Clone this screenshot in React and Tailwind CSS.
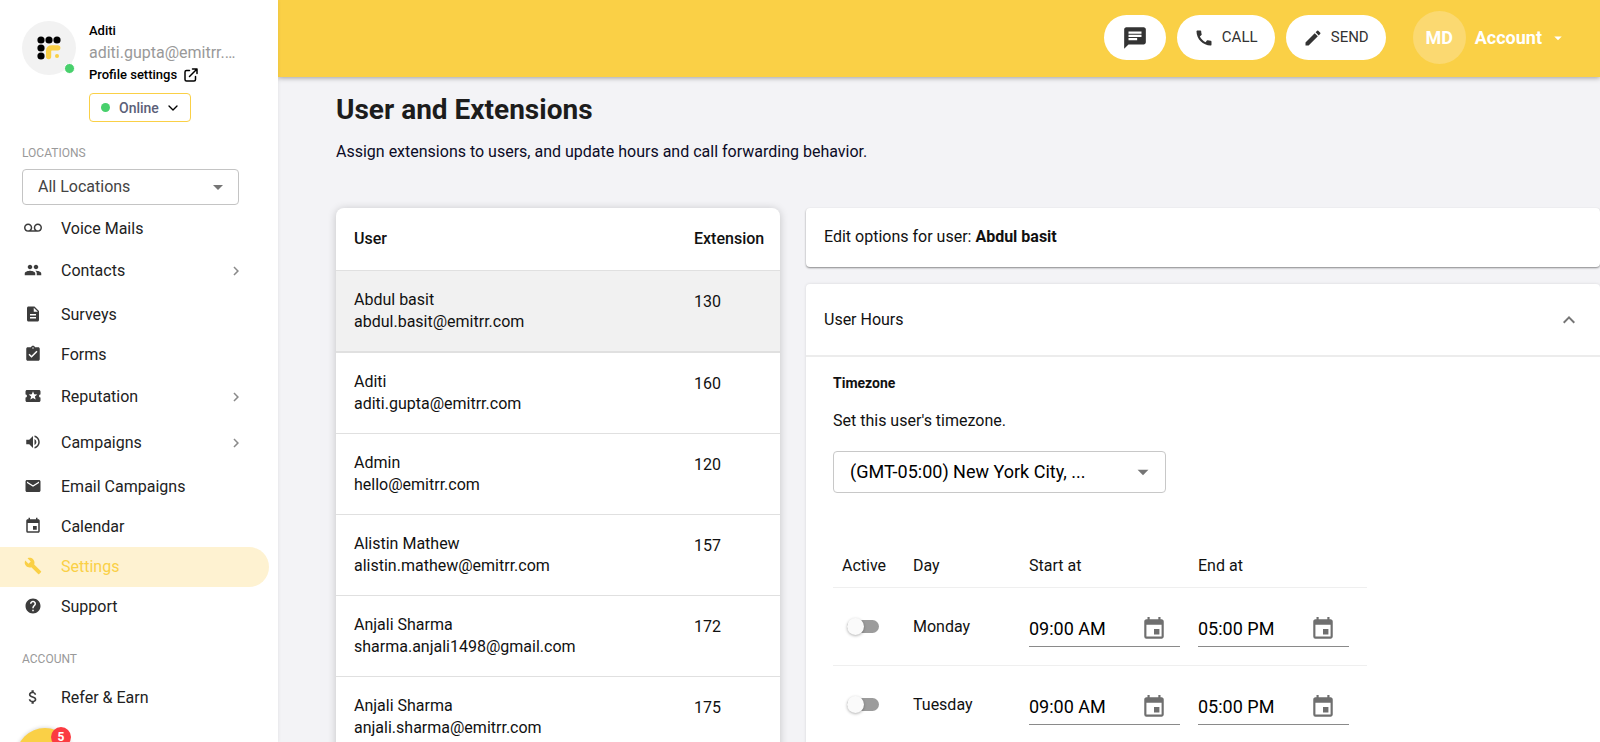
import React, { useState } from "react";
import {
  MdVoicemail,
  MdPeople,
  MdDescription,
  MdAssignmentTurnedIn,
  MdLocalActivity,
  MdVolumeUp,
  MdEmail,
  MdEvent,
  MdBuild,
  MdHelp,
  MdAttachMoney,
  MdChat,
  MdCall,
  MdCreate,
  MdArrowDropDown,
  MdExpandLess,
  MdChevronRight,
} from "react-icons/md";
import { HiOutlineExternalLink } from "react-icons/hi";
import { ChevronDown } from "lucide-react";
import clsx from "clsx";

const navItems = [
  { label: "Voice Mails", icon: MdVoicemail },
  { label: "Contacts", icon: MdPeople, expandable: true },
  { label: "Surveys", icon: MdDescription },
  { label: "Forms", icon: MdAssignmentTurnedIn },
  { label: "Reputation", icon: MdLocalActivity, expandable: true },
  { label: "Campaigns", icon: MdVolumeUp, expandable: true },
  { label: "Email Campaigns", icon: MdEmail },
  { label: "Calendar", icon: MdEvent },
  { label: "Settings", icon: MdBuild, active: true },
  { label: "Support", icon: MdHelp },
];

const users = [
  { name: "Abdul basit", email: "abdul.basit@emitrr.com", extension: 130 },
  { name: "Aditi", email: "aditi.gupta@emitrr.com", extension: 160 },
  { name: "Admin", email: "hello@emitrr.com", extension: 120 },
  { name: "Alistin Mathew", email: "alistin.mathew@emitrr.com", extension: 157 },
  { name: "Anjali Sharma", email: "sharma.anjali1498@gmail.com", extension: 172 },
  { name: "Anjali Sharma", email: "anjali.sharma@emitrr.com", extension: 175 },
];

const days = ["Monday", "Tuesday"];

function Logo() {
  return (
    <svg viewBox="0 0 24 24" className="size-6" aria-hidden="true">
      <circle cx="4" cy="4" r="3.6" />
      <circle cx="12" cy="4" r="3.6" />
      <circle cx="20" cy="4" r="3.6" />
      <circle cx="4" cy="12" r="3.6" />
      <circle cx="4" cy="20" r="3.6" />
      <path
        d="M11.6 20.6V15q0-3.2 3.2-3.2h6"
        fill="none"
        stroke="#fad046"
        strokeWidth="5.2"
        strokeLinecap="round"
      />
      <circle cx="20" cy="20" r="2" fill="#fad046" />
    </svg>
  );
}

function NavItem({ item }) {
  return (
    <a
      href="#"
      className={clsx(
        "mr-[9px] flex items-center rounded-r-full pl-6",
        item.expandable ? "h-[46px] pb-[2px]" : "h-10",
        item.active ? "bg-[#fef2d1] text-[#fad046]" : "text-[#222]"
      )}
    >
      <item.icon
        size={18}
        className={clsx("mb-[2px] shrink-0", !item.active && "text-[#3c3c3c]")}
      />
      <span className="ml-[19px] flex-1">{item.label}</span>
      {item.expandable && (
        <MdChevronRight size={18} className="mr-6 text-[#8a8a8a]" />
      )}
    </a>
  );
}

function Sidebar() {
  return (
    <aside className="z-10 flex w-[278px] shrink-0 flex-col overflow-hidden bg-white shadow-[0_0_4px_rgba(0,0,0,0.08)]">
      <div className="flex pl-[22px] pt-[21px]">
        <div className="relative size-[54px] shrink-0">
          <div className="flex size-full items-center justify-center rounded-full bg-[#f2f2f2]">
            <Logo />
          </div>
          <span className="absolute right-px bottom-px size-[11px] rounded-full border border-white bg-[#48d06c]" />
        </div>
        <div className="ml-[13px] min-w-0">
          <p className="text-[13px] leading-5 font-medium text-black">Aditi</p>
          <p className="w-[150px] truncate text-base leading-6 text-[#999]">
            aditi.gupta@emitrr.com
          </p>
          <a
            href="#"
            className="flex items-center gap-[5px] text-[13px] leading-5 font-medium text-black"
          >
            Profile settings
            <HiOutlineExternalLink size={18} />
          </a>
          <button className="mt-2 flex h-[29px] w-[102px] items-center rounded border border-[#fad046] pl-[11px] text-sm font-medium text-[#5b6078]">
            <span className="mr-[9px] size-[9px] rounded-full bg-[#48d06c]" />
            Online
            <ChevronDown size={16} className="ml-[6px] text-black" />
          </button>
        </div>
      </div>

      <label
        htmlFor="location"
        className="mt-[21px] pl-[22px] text-xs leading-5 text-[#999]"
      >
        LOCATIONS
      </label>
      <div className="relative mt-[6px] ml-[22px] w-[217px]">
        <select
          id="location"
          className="h-9 w-full appearance-none rounded border border-[#c4c4c4] pl-[15px] text-base text-[#444]"
        >
          <option>All Locations</option>
        </select>
        <MdArrowDropDown
          size={24}
          className="pointer-events-none absolute top-[6px] right-[9px] text-[#757575]"
        />
      </div>

      <nav className="mt-1">
        {navItems.map((item) => (
          <NavItem key={item.label} item={item} />
        ))}
        <p className="mt-[22px] mb-[9px] pl-[22px] text-xs leading-5 text-[#999]">
          ACCOUNT
        </p>
        <NavItem item={{ label: "Refer & Earn", icon: MdAttachMoney }} />
      </nav>
    </aside>
  );
}

function Header() {
  return (
    <header className="z-[5] flex h-[77px] shrink-0 items-center justify-end bg-[#fad046] pr-[33px] pb-[2px] shadow-[0_1px_5px_rgba(0,0,0,0.35)]">
      <div className="flex gap-[11px] text-[15px] text-[#333]">
        <button
          aria-label="Messages"
          className="flex h-[45px] w-[62px] items-center justify-center rounded-full bg-white"
        >
          <MdChat size={26} />
        </button>
        <button className="flex h-[45px] w-[98px] items-center justify-center gap-2 rounded-full bg-white">
          <MdCall size={20} />
          CALL
        </button>
        <button className="flex h-[45px] w-[100px] items-center justify-center gap-2 rounded-full bg-white">
          <MdCreate size={20} />
          SEND
        </button>
      </div>
      <button className="ml-[27px] flex items-center text-lg font-bold text-white">
        <span className="flex size-[53px] items-center justify-center rounded-full bg-[#fbd971]">
          MD
        </span>
        <span className="ml-[9px]">Account</span>
        <MdArrowDropDown size={18} className="ml-[7px]" />
      </button>
    </header>
  );
}

function UsersTable() {
  return (
    <table className="w-[444px] shrink-0 self-start overflow-hidden rounded-t-lg bg-white text-left text-base text-[#111] shadow-[0_1px_8px_rgba(0,0,0,0.2)]">
      <thead>
        <tr className="h-[62px] border-b border-[#e0e0e0]">
          <th className="pl-[18px] font-medium">User</th>
          <th className="w-[86px] font-medium">Extension</th>
        </tr>
      </thead>
      <tbody>
        {users.map((user, i) => (
          <tr
            key={user.email}
            className={clsx(
              "border-[#e0e0e0] align-top leading-[22px]",
              i === 0 ? "h-[82px] border-b-2 bg-[#f1f1f1]" : "h-[81px] border-b"
            )}
          >
            <td className="pt-[18px] pl-[18px]">
              <p>{user.name}</p>
              <p>{user.email}</p>
            </td>
            <td className="pt-5">{user.extension}</td>
          </tr>
        ))}
      </tbody>
    </table>
  );
}

function Toggle({ label }) {
  const [on, setOn] = useState(false);
  return (
    <label className="relative mt-[30px] ml-[5px] flex h-[17px] w-8 items-center">
      <input
        type="checkbox"
        aria-label={label}
        checked={on}
        onChange={() => setOn(!on)}
        className="peer h-[13px] w-full appearance-none rounded-full bg-[#9c9c9c] checked:bg-[#fad046]"
      />
      <span className="pointer-events-none absolute left-0 size-[17px] rounded-full bg-[#fafafa] shadow-[0_1px_3px_rgba(0,0,0,0.3)] peer-checked:left-auto peer-checked:right-0" />
    </label>
  );
}

function TimeField({ label, value }) {
  return (
    <div className="mt-[22px] flex h-[37px] w-[151px] items-center border-b border-[#8a8a8a] pt-[2px]">
      <input
        type="text"
        aria-label={label}
        defaultValue={value}
        className="w-28 text-lg text-black outline-none"
      />
      <button aria-label={`Pick ${label}`} className="text-[#6f6f6f]">
        <MdEvent size={26} />
      </button>
    </div>
  );
}

function HoursTable() {
  return (
    <table className="mt-12 w-[534px] text-left text-base text-[#111]">
      <thead>
        <tr className="h-[46px] border-b border-[#efefef]">
          <th className="w-[71px] pt-1 pl-[9px] font-normal">Active</th>
          <th className="w-[116px] pt-1 pl-[9px] font-normal">Day</th>
          <th className="w-[169px] pt-1 pl-[9px] font-normal">Start at</th>
          <th className="pt-1 pl-[9px] font-normal">End at</th>
        </tr>
      </thead>
      <tbody>
        {days.map((day) => (
          <tr key={day} className="h-[78px] border-b border-[#efefef] align-top">
            <td className="pl-[9px]">
              <Toggle label={`${day} active`} />
            </td>
            <td className="pt-[27px] pl-[9px]">{day}</td>
            <td className="pl-[9px]">
              <TimeField label={`${day} start`} value="09:00 AM" />
            </td>
            <td className="pl-[9px]">
              <TimeField label={`${day} end`} value="05:00 PM" />
            </td>
          </tr>
        ))}
      </tbody>
    </table>
  );
}

function UserOptions() {
  return (
    <section className="min-w-0 flex-1 text-base text-[#111]">
      <div className="flex h-[59px] items-center rounded bg-white pb-[2px] pl-[18px] shadow-[0_1px_2px_rgba(0,0,0,0.45)]">
        <p>
          Edit options for user: <b>Abdul basit</b>
        </p>
      </div>

      <div className="mt-[17px] rounded-t bg-white shadow-[0_0_3px_rgba(0,0,0,0.12)]">
        <button className="flex h-[73px] w-full items-center justify-between border-b-2 border-[#ececec] pr-[19px] pl-[18px]">
          User Hours
          <MdExpandLess size={24} className="text-[#757575]" />
        </button>
        <div className="pt-4 pl-[27px]">
          <label
            htmlFor="timezone"
            className="block text-sm leading-5 font-bold"
          >
            Timezone
          </label>
          <p className="mt-4 leading-6">Set this user's timezone.</p>
          <div className="relative mt-[18px] w-[333px]">
            <select
              id="timezone"
              className="h-[42px] w-full appearance-none rounded border border-[#c8c8c8] pl-4 text-lg text-black"
            >
              <option>(GMT-05:00) New York City, ...</option>
            </select>
            <MdArrowDropDown
              size={26}
              className="pointer-events-none absolute top-2 right-[10px] text-[#757575]"
            />
          </div>
          <HoursTable />
        </div>
      </div>
    </section>
  );
}

export default function App() {
  return (
    <div className="flex h-screen overflow-hidden bg-[#f3f3f6] font-[Roboto,sans-serif]">
      <Sidebar />
      <div className="flex min-w-0 flex-1 flex-col">
        <Header />
        <main className="min-h-0 flex-1 overflow-hidden pt-[13px] pl-[58px]">
          <h1 className="text-[28px] leading-10 font-bold text-[#1c1c1c]">
            User and Extensions
          </h1>
          <p className="mt-[10px] text-base leading-6 text-[#0b0b26]">
            Assign extensions to users, and update hours and call forwarding
            behavior.
          </p>
          <div className="mt-11 flex gap-[26px]">
            <UsersTable />
            <UserOptions />
          </div>
        </main>
      </div>

      {/* Chat launcher, peeking over the bottom edge */}
      <button
        aria-label="Open chat, 5 unread"
        className="fixed -bottom-11 left-4 z-20 size-[58px] rounded-full bg-[#fad046] shadow-[0_0_4px_rgba(0,0,0,0.2)]"
      >
        <span className="absolute -top-px right-[3px] flex size-5 items-center justify-center rounded-full bg-[#fb3b41] text-xs leading-3 font-bold text-white">
          5
        </span>
      </button>
    </div>
  );
}
